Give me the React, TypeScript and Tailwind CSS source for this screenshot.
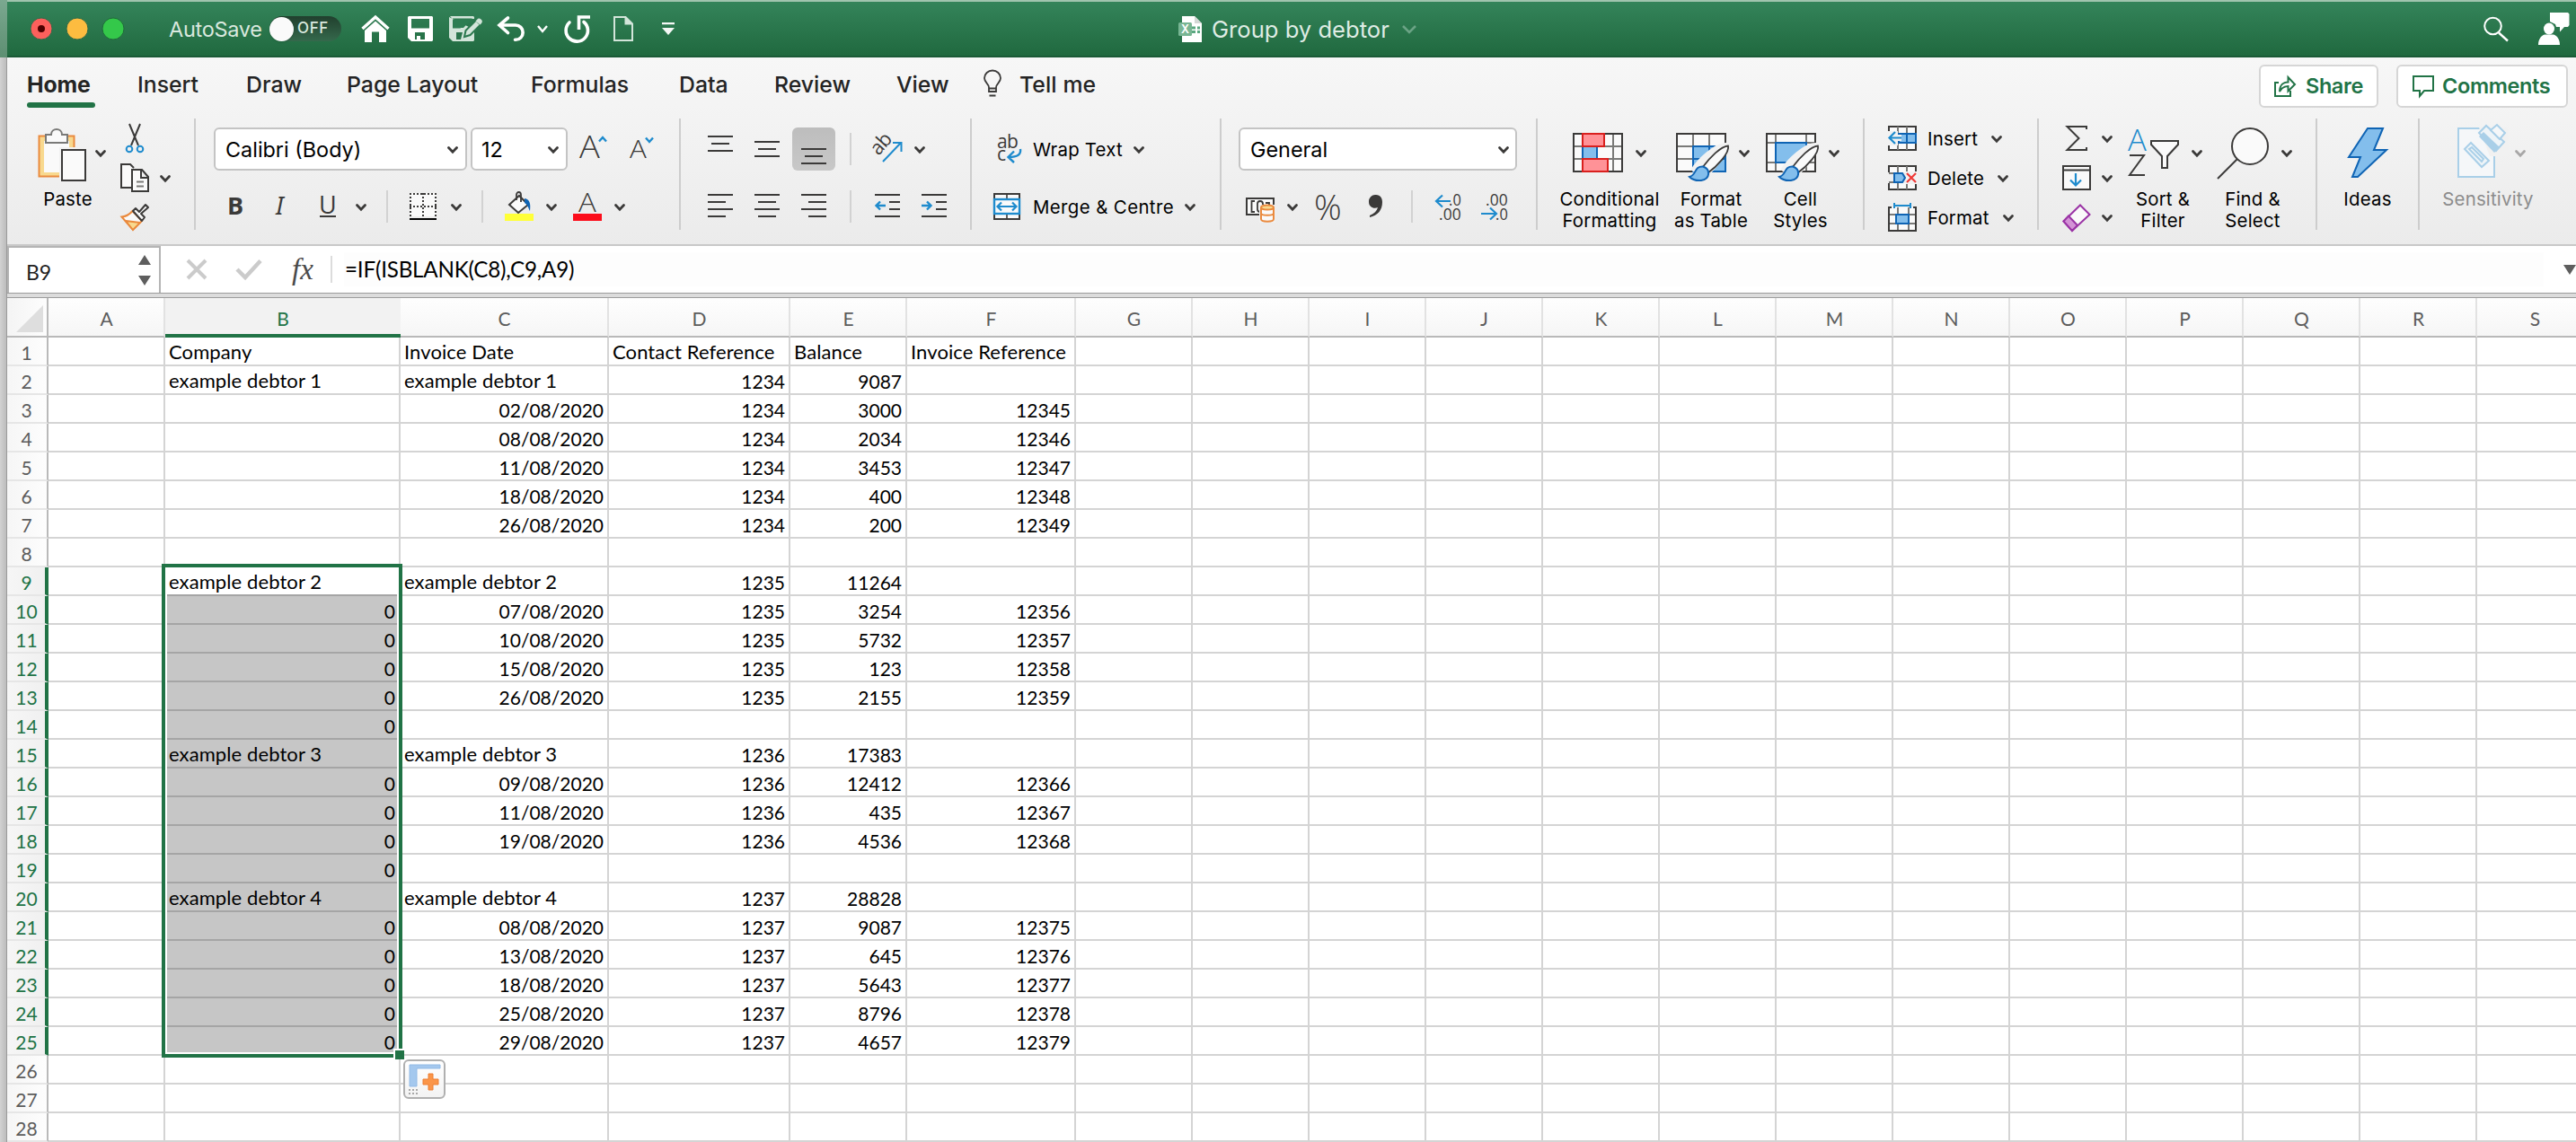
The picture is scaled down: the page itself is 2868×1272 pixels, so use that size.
import type { ReactNode } from 'react';
import clsx from 'clsx';

const tabs = [
  { label: 'Home', cls: 'w-[123px] font-bold tracking-[-0.1px]' },
  { label: 'Insert', cls: 'w-[121px]' },
  { label: 'Draw', cls: 'w-[112px]' },
  { label: 'Page Layout', cls: 'w-[205px]' },
  { label: 'Formulas', cls: 'w-[165px]' },
  { label: 'Data', cls: 'w-[106px]' },
  { label: 'Review', cls: 'w-[136px]' },
  { label: 'View', cls: 'w-[96px]' },
];

const columns = [
  { name: 'A', width: 130 },
  { name: 'B', width: 262 },
  { name: 'C', width: 232 },
  { name: 'D', width: 202 },
  { name: 'E', width: 130 },
  { name: 'F', width: 188 },
  ...'GHIJKLMNOPQRS'.split('').map((name) => ({ name, width: 130 })),
];

// columns B to F, rows 1 to 28
const rows: string[][] = [
  ['Company', 'Invoice Date', 'Contact Reference', 'Balance', 'Invoice Reference'],
  ['example debtor 1', 'example debtor 1', '1234', '9087', ''],
  ['', '02/08/2020', '1234', '3000', '12345'],
  ['', '08/08/2020', '1234', '2034', '12346'],
  ['', '11/08/2020', '1234', '3453', '12347'],
  ['', '18/08/2020', '1234', '400', '12348'],
  ['', '26/08/2020', '1234', '200', '12349'],
  [],
  ['example debtor 2', 'example debtor 2', '1235', '11264', ''],
  ['0', '07/08/2020', '1235', '3254', '12356'],
  ['0', '10/08/2020', '1235', '5732', '12357'],
  ['0', '15/08/2020', '1235', '123', '12358'],
  ['0', '26/08/2020', '1235', '2155', '12359'],
  ['0'],
  ['example debtor 3', 'example debtor 3', '1236', '17383', ''],
  ['0', '09/08/2020', '1236', '12412', '12366'],
  ['0', '11/08/2020', '1236', '435', '12367'],
  ['0', '19/08/2020', '1236', '4536', '12368'],
  ['0'],
  ['example debtor 4', 'example debtor 4', '1237', '28828', ''],
  ['0', '08/08/2020', '1237', '9087', '12375'],
  ['0', '13/08/2020', '1237', '645', '12376'],
  ['0', '18/08/2020', '1237', '5643', '12377'],
  ['0', '25/08/2020', '1237', '8796', '12378'],
  ['0', '29/08/2020', '1237', '4657', '12379'],
  [],
  [],
  [],
];

const DARK = '#3b3a39';
const BLUE = '#1e8bcd';
const NAVY = '#0f64b4';
const SKY = '#83beec';
const PAPER = '#fafafa';

function Icon({ w, h, className, children }: { w: number; h: number; className?: string; children: ReactNode }) {
  return (
    <svg width={w} height={h} viewBox={`0 0 ${w} ${h}`} fill="none" className={clsx('shrink-0 overflow-visible', className)}>
      {children}
    </svg>
  );
}

function Chevron({ className }: { className?: string }) {
  return (
    <Icon w={12} h={8} className={clsx('relative top-px text-[#3b3a39]', className)}>
      <path d="M1.5 1.5L6 6.2l4.5-4.7" stroke="currentColor" strokeWidth="2.8" strokeLinecap="round" />
    </Icon>
  );
}

function Divider({ className }: { className?: string }) {
  return <div className={clsx('h-[124px] w-[2px] shrink-0 bg-[#cdcdcd]', className)} />;
}

function SmallDivider({ className }: { className?: string }) {
  return <div className={clsx('h-9 w-[2px] shrink-0 bg-[#d2d2d2]', className)} />;
}

function Lines({ className, rows }: { className?: string; rows: [number, number, number][] }) {
  return (
    <Icon w={28} h={30} className={className}>
      {rows.map(([x, y, w], i) => (
        <rect key={i} x={x} y={y} width={w} height="2" fill={DARK} />
      ))}
    </Icon>
  );
}

function Group({ className, top, bottom }: { className?: string; top: ReactNode; bottom: ReactNode }) {
  return (
    <div className={clsx('flex shrink-0 flex-col gap-4 pt-[10px]', className)}>
      <div className="flex h-12 items-center">{top}</div>
      <div className="flex h-12 items-center">{bottom}</div>
    </div>
  );
}

function Big({ className, icon, label, labelCls, chevron }: { className?: string; icon: ReactNode; label: ReactNode; labelCls: string; chevron?: string }) {
  return (
    <div className={clsx('flex shrink-0 flex-col', className)}>
      <div className="flex h-[66px] items-start">
        {icon}
        {chevron && <Chevron className={chevron} />}
      </div>
      <div className={clsx('text-center leading-6', labelCls)}>{label}</div>
    </div>
  );
}

function TitleBar() {
  return (
    <div className="flex h-16 items-center border-t-2 border-b-2 border-t-[#a0c4ae] border-b-[#1b5a37] bg-linear-to-b from-[#34845a] to-[#20693f] pl-[25px] text-[#d9e8de]">
      <Icon w={106} h={28}>
        <circle cx="13" cy="14" r="12" fill="#fc605c" stroke="#2f6a47" />
        <circle cx="13" cy="14" r="4" fill="#4d0000" />
        <circle cx="53" cy="14" r="12" fill="#fdbc40" stroke="#2f6a47" />
        <circle cx="93" cy="14" r="12" fill="#34c84a" stroke="#1f6a3a" />
      </Icon>
      <span className="ml-[49px] w-[112px] pt-[2px] text-[23.5px] tracking-[-0.3px] whitespace-nowrap">AutoSave</span>
      <div className="flex h-7 w-[80px] items-center rounded-full bg-linear-to-b from-[#21402e] to-[#35694c]">
        <div className="size-[27px] rounded-full bg-[#fafafa] shadow" />
        <span className="ml-1 text-[17px] font-medium tracking-[0.6px]">OFF</span>
      </div>
      <Icon w={32} h={30} className="ml-[22px]">
        <path d="M1.5 15L16 2l14.500 13" stroke="#fff" strokeWidth="3.400" />
        <path d="M4 17L16 6.500 28 17v13h-8V18.500h-8V30H4z" fill="#fff" />
      </Icon>
      <Icon w={28} h={28} className="ml-[20px]">
        <path fillRule="evenodd" d="M1 0h26l1 1v26l-1 1H4l-4-4V1zM4 3v10.500h20V3zM8 18v8h2v-4h4v4h5v-8z" fill="#fff" />
      </Icon>
      <Icon w={36} h={28} className="ml-[18px]">
        <path d="M1 0h26l1 1v2h-2.500V2.500H4v11h18L15 20l-1 3h-3v3H9v-8h8M28 15v12l-1 1H4l-4-4V1" fill="#d3e5da" />
        <path d="M4.500 3.500h20.500L16 13H4.500z" fill="#2d7d52" />
        <path d="M8 18h7l-2 8H8z" fill="#2a754c" />
        <path d="M17 23l1.500-7L30 4.500l5 5L23.500 21z" fill="#d3e5da" stroke="#2b784e" strokeWidth="2" />
        <path d="M31 4a3 3 0 0 1 5 4l-1.500 1.500-5-4z" fill="#d3e5da" />
      </Icon>
      <Icon w={31} h={28} className="ml-[18px]">
        <path d="M11.500 2L2 10l9.500 8.500M3 10h17a8 8 0 0 1 0 16.300h-.5" stroke="#fff" strokeWidth="3.600" strokeLinecap="round" />
      </Icon>
      <Icon w={12} h={8} className="ml-[13px]">
        <path d="M1 1l5 6 5-6" stroke="#fff" strokeWidth="2.400" />
      </Icon>
      <Icon w={30} h={30} className="ml-[18px]">
        <path d="M6 8A12.200 12.200 0 1 0 22 7.500" stroke="#fff" strokeWidth="3.600" strokeLinecap="round" />
        <path d="M16.500 16V2H29" stroke="#fff" strokeWidth="3.600" />
      </Icon>
      <Icon w={22} h={28} className="ml-[25px]">
        <path d="M1 1h12.500L21 8.500V27H1z" stroke="#d3e5da" strokeWidth="2" />
        <path d="M12.500 0L22 9.500h-9.500z" fill="#d3e5da" />
      </Icon>
      <Icon w={14} h={14} className="ml-[32px]">
        <path d="M0 0h14v2.200H0zM0 6h14l-7 8z" fill="#f5f8f6" />
      </Icon>

      <Icon w={26} h={29} className="ml-[561px]">
        <path d="M4 0h14l8 8v21H4z" fill="#fff" />
        <path d="M18 0l8 8h-8z" fill="#d4d9d6" />
        <path d="M15 11.500h4v3h-4zm6 0h3v3h-3zm-6 4.500h4v3h-4zm6 0h3v3h-3z" fill="#5aa880" />
        <rect y="7" width="15" height="15" rx="1.500" fill="#78b593" />
        <text x="3" y="19" fontSize="12.500" fontWeight="600" fill="#fff">X</text>
      </Icon>
      <span className="ml-[11px] w-[212px] pt-[3px] text-[25.6px] whitespace-nowrap text-[#dfece4]">Group by debtor</span>
      <Icon w={16} h={9}>
        <path d="M1 1l7 7 7-7" stroke="#6ba385" strokeWidth="2.600" />
      </Icon>
      <Icon w={28} h={28} className="ml-[1188px]">
        <circle cx="10.500" cy="11" r="9.300" stroke="#fff" strokeWidth="2" />
        <path d="M17 18.500l10 9" stroke="#fff" strokeWidth="2.400" />
      </Icon>
      <Icon w={36} h={36} className="ml-[33px]">
        <path d="M0 36c0-6 3-10.500 7-11.500h10c4 1 7 5.500 7 11.500z" fill="#fff" />
        <ellipse cx="12" cy="18" rx="6" ry="6.500" fill="#fff" />
        <path d="M13 0h20l1.500 1.500V14L33 16h-4l-5 5.500V16h-4l-1-3-6-3z" fill="#fff" />
      </Icon>
    </div>
  );
}

function TabBar() {
  return (
    <div className="flex h-[68px] items-center pl-[22px] text-[24.8px] font-medium text-[#242424]">
      {tabs.map((tab, i) => (
        <div key={tab.label} className={clsx('relative shrink-0 whitespace-nowrap', tab.cls)}>
          <span className="relative -top-[3px]">{tab.label}</span>
          {i === 0 && <div className="absolute -bottom-[3px] left-0 h-[6px] w-[76px] rounded-full bg-[#217346]" />}
        </div>
      ))}
      <Icon w={20} h={30} className="relative -top-[5px] ml-px">
        <path d="M6 19.500C6 15 1 14 1 9a9 8.500 0 0 1 18 0c0 5-5 6-5 10.500V24H6zM6 20.500h8" stroke={DARK} strokeWidth="1.800" />
        <path d="M6.500 28.500h7" stroke={DARK} strokeWidth="2" />
      </Icon>
      <span className="relative -top-[3px] ml-5 w-[1380px] shrink-0 tracking-[0.1px]">Tell me</span>
      <div className="mt-2 flex h-12 w-[133px] shrink-0 items-center self-start rounded-md border-2 border-[#d6d6d6] bg-white pl-[15px] font-semibold text-[#217346]">
        <Icon w={24} h={24}>
          <path d="M5 8H1v15h17v-6" stroke="#217346" strokeWidth="2" />
          <path d="M6 18c0-7 4-10.500 9.500-10.500V2l7.500 8-7.500 7.500V12C11 12 8 14 6 18z" stroke="#217346" strokeWidth="2" />
        </Icon>
        <span className="ml-[11px] text-[23.5px] tracking-[-0.4px]">Share</span>
      </div>
      <div className="mt-2 ml-5 flex h-12 w-[191px] shrink-0 items-center self-start rounded-md border-2 border-[#d6d6d6] bg-white pl-[16px] font-semibold text-[#217346]">
        <Icon w={24} h={24}>
          <path d="M1 1h22v16H13l-5 6v-6H1z" stroke="#217346" strokeWidth="2" />
        </Icon>
        <span className="ml-[9px] text-[23.5px] tracking-[-0.35px]">Comments</span>
      </div>
    </div>
  );
}

function Brush() {
  return (
    <>
      <path d="M18 42C24 32 44 12 56 13c6 3-16 30-28 39" fill="#f2f2f2" stroke="#f2f2f2" strokeWidth="4" />
      <path d="M29 39C38 27 50 15 58 14.500 60 22 46 37 35 45z" fill={PAPER} stroke={DARK} strokeWidth="1.800" />
      <path d="M15 49c8-2 5-12 15-11.500 9 3 8 14-2 15.500-5 .5-10-1-13-4z" fill={SKY} stroke={NAVY} strokeWidth="2" />
    </>
  );
}

function Ribbon() {
  return (
    <div className="flex h-[142px] items-start border-b-2 border-[#c8c8c8] text-[20.4px] tracking-[0.2px] text-black">
      {/* clipboard */}
      <div className="ml-[34px] w-[92px] shrink-0 pt-[10px]">
        <div className="flex h-[68px] items-start">
          <Icon w={54} h={60}>
            <rect x="1.500" y="9.500" width="39" height="45" fill="#f8d98f" stroke="#ea8a3e" strokeWidth="2" />
            <path d="M7 15h28v35H7z" fill={PAPER} />
            <path d="M9 8h6c0-8 12-8 12 0h6v9H9z" fill={PAPER} stroke="#7a7a78" strokeWidth="2" />
            <path d="M24 22h20v35H24z" fill="#f2f2f2" />
            <rect x="27" y="25" width="26" height="34" fill={PAPER} stroke={DARK} strokeWidth="2" />
          </Icon>
          <Chevron className="mt-6 ml-[10px]" />
        </div>
        <div className="w-[67px] text-center leading-6">Paste</div>
      </div>
      <div className="w-[82px] shrink-0">
        <div className="flex h-11 items-center">
          <Icon w={20} h={32} className="ml-[6px]">
            <path d="M4 0l10 24M16 0L6 24" stroke={DARK} strokeWidth="2" />
            <circle cx="4" cy="28" r="3.300" stroke={BLUE} strokeWidth="2" />
            <circle cx="16" cy="28" r="3.300" stroke={BLUE} strokeWidth="2" />
          </Icon>
        </div>
        <div className="flex h-11 items-center">
          <Icon w={32} h={32}>
            <path d="M12 27H1V1h10l4 4" fill={PAPER} stroke={DARK} strokeWidth="2" />
            <path d="M13 7h11l7 8v16H13zM23 7v9h8" fill={PAPER} stroke={DARK} strokeWidth="2" />
            <path d="M18 20.500h8M18 25.500h8" stroke="#7a7a78" strokeWidth="2" />
          </Icon>
          <Chevron className="ml-3" />
        </div>
        <div className="flex h-11 items-center">
          <Icon w={32} h={30}>
            <path d="M1.500 14.500C7 14 11 11 13.500 8L24 19 14 29z" fill={PAPER} stroke="#ea8a3e" strokeWidth="2" />
            <path d="M6 19l16 2-8 8z" fill="#f8d98f" stroke="#ea8a3e" strokeWidth="1.800" />
            <path d="M14 8l3-3 4 4 7-8 3 3-8 7 4 4-3 4z" fill={PAPER} stroke={DARK} strokeWidth="2" strokeLinejoin="round" />
          </Icon>
        </div>
      </div>
      <Divider />

      {/* font */}
      <Group
        className="w-[538px]"
        top={
          <>
            <div className="ml-5 flex h-12 w-[282px] shrink-0 items-center justify-between rounded-md border-2 border-[#c4c4c4] bg-white pr-2 pl-[11px] text-[23.4px] tracking-normal">
              <span className="pt-[2px]">Calibri (Body)</span>
              <Chevron />
            </div>
            <div className="ml-1 flex h-12 w-[108px] shrink-0 items-center justify-between rounded-md border-2 border-[#c4c4c4] bg-white pr-2 pl-[10px] text-[23.4px] tracking-normal">
              <span className="pt-[2px]">12</span>
              <Chevron />
            </div>
            <Icon w={30} h={48} className="ml-[14px]">
              <text x="-1" y="34" fontSize="34" className="font-['Open_Sans'] font-light" fill={DARK} textLength="23" lengthAdjust="spacingAndGlyphs">A</text>
              <path d="M21 15.500l4-4.500 4 4.500" stroke={BLUE} strokeWidth="2.400" />
            </Icon>
            <Icon w={30} h={48} className="ml-[25px]">
              <text x="0" y="34" fontSize="27" className="font-['Open_Sans'] font-light" fill={DARK} textLength="19" lengthAdjust="spacingAndGlyphs">A</text>
              <path d="M18 11.500l4 4.500 4-4.500" stroke={BLUE} strokeWidth="2.400" />
            </Icon>
          </>
        }
        bottom={
          <>
            <span className="ml-[35px] w-[54px] shrink-0 pb-1 font-['Open_Sans'] text-[27px] leading-none font-bold text-[#3b3a39]">B</span>
            <span className="w-[48px] shrink-0 pb-1 font-['Noto_Sans'] text-[27px] leading-none text-[#3b3a39] italic">I</span>
            <Icon w={20} h={48}>
              <text x="0" y="32" fontSize="27" className="font-['Open_Sans']" fill={DARK}>U</text>
              <path d="M1 35h18" stroke={DARK} strokeWidth="2" />
            </Icon>
            <Chevron className="ml-[21px]" />
            <SmallDivider className="ml-[22px]" />
            <Icon w={30} h={30} className="ml-6">
              <rect width="30" height="26" fill={PAPER} />
              <path d="M0 1h30M1 0v26M29 0v26M0 15h30M15 0v26" stroke={DARK} strokeWidth="2" strokeDasharray="2 2" />
              <path d="M0 29h30" stroke="#000" strokeWidth="2" />
            </Icon>
            <Chevron className="ml-4" />
            <SmallDivider className="ml-[22px]" />
            <Icon w={32} h={32} className="ml-6">
              <path d="M5 14L16 4l10 10-11 9z" fill={PAPER} stroke={DARK} strokeWidth="2" />
              <path d="M13 9V3c0-4 5-4 5 0v8" stroke={DARK} strokeWidth="1.800" />
              <path d="M22 7c6 1 7 6 6 14-2-3-2-7-6-9z" fill={NAVY} />
              <rect y="24" width="32" height="8" fill="#ffff38" />
            </Icon>
            <Chevron className="ml-[14px]" />
            <Icon w={32} h={32} className="ml-[18px]">
              <text x="6" y="21.500" fontSize="30" className="font-['Open_Sans'] font-light" fill={DARK} textLength="20" lengthAdjust="spacingAndGlyphs">A</text>
              <rect y="24" width="32" height="8" fill="#fc0d1b" />
            </Icon>
            <Chevron className="ml-[14px]" />
          </>
        }
      />
      <Divider />

      {/* alignment */}
      <Group
        className="w-[322px]"
        top={
          <>
            <Lines className="ml-[30px]" rows={[[0, 0, 28], [4, 8, 20], [0, 16, 28]]} />
            <Lines className="ml-6" rows={[[0, 6, 28], [4, 14, 20], [0, 22, 28]]} />
            <div className="ml-[14px] flex h-12 w-12 shrink-0 items-center rounded-md bg-linear-to-b from-[#bdbdbd] to-[#c8c8c8] pl-[10px]">
              <Lines rows={[[0, 14, 28], [4, 22, 20], [0, 30, 28]]} />
            </div>
            <SmallDivider className="ml-4" />
            <Icon w={34} h={32} className="ml-6">
              <text x="6" y="24" transform="rotate(-48 6 24)" fontSize="22" className="font-['Open_Sans']" fill={DARK} textLength="25">ab</text>
              <path d="M11 30L31 9M22 9h9.500v10" stroke={BLUE} strokeWidth="2" />
            </Icon>
            <Chevron className="ml-[12px]" />
          </>
        }
        bottom={
          <>
            <Lines className="ml-[30px]" rows={[[0, 1, 28], [0, 9, 20], [0, 17, 28], [0, 25, 20]]} />
            <Lines className="ml-6" rows={[[0, 1, 28], [4, 9, 20], [0, 17, 28], [4, 25, 20]]} />
            <Lines className="ml-6" rows={[[0, 1, 28], [8, 9, 20], [0, 17, 28], [8, 25, 20]]} />
            <SmallDivider className="ml-[26px]" />
            <Icon w={28} h={30} className="ml-[26px]">
              <path d="M0 2h28M16 10h12M16 18h12M0 26h28" stroke={DARK} strokeWidth="2" />
              <path d="M12 14H2M6 9.500L1.500 14 6 18.500" stroke={BLUE} strokeWidth="2.400" />
            </Icon>
            <Icon w={28} h={30} className="ml-6">
              <path d="M0 2h28M16 10h12M16 18h12M0 26h28" stroke={DARK} strokeWidth="2" />
              <path d="M0 14h10M6 9.500l4.500 4.500L6 18.500" stroke={BLUE} strokeWidth="2.400" />
            </Icon>
          </>
        }
      />
      <Divider />

      {/* wrap and merge */}
      <Group
        className="w-[276px]"
        top={
          <>
            <Icon w={28} h={36} className="ml-7">
              <text x="0" y="17" fontSize="21" className="font-['Open_Sans']" fill={DARK} textLength="24">ab</text>
              <text x="0" y="31" fontSize="21" className="font-['Open_Sans']" fill={DARK}>c</text>
              <path d="M26 18c1 6-3 9-13 9M19 20.500L12.500 27l6.500 6" stroke={BLUE} strokeWidth="2.400" />
            </Icon>
            <span className="ml-3 w-[112px] shrink-0 pt-[2px] whitespace-nowrap">Wrap Text</span>
            <Chevron />
          </>
        }
        bottom={
          <>
            <Icon w={30} h={30} className="ml-6">
              <rect x="1" y="1" width="28" height="28" fill={PAPER} stroke={DARK} strokeWidth="2" />
              <path d="M15 1v28" stroke={DARK} strokeWidth="1.600" />
              <rect x="1" y="7" width="28" height="16" fill={PAPER} stroke={BLUE} strokeWidth="2.400" />
              <path d="M5 15h20M9 10.500L4.500 15 9 19.500M21 10.500l4.500 4.500-4.500 4.500" stroke={BLUE} strokeWidth="2.200" />
            </Icon>
            <span className="ml-[14px] w-[169px] shrink-0 pt-[2px] tracking-[0.4px] whitespace-nowrap">Merge &amp; Centre</span>
            <Chevron />
          </>
        }
      />
      <Divider />

      {/* number */}
      <Group
        className="w-[350px]"
        top={
          <div className="ml-[19px] flex h-12 w-[310px] items-center justify-between rounded-md border-2 border-[#c4c4c4] bg-white pr-[7px] pl-[11px] text-[23.4px] tracking-normal">
            <span className="pt-[2px]">General</span>
            <Chevron />
          </div>
        }
        bottom={
          <>
            <Icon w={32} h={30} className="ml-[27px]">
              <rect x="1" y="6" width="30" height="18" fill={PAPER} stroke={DARK} strokeWidth="2" />
              <path d="M10 9H6.500v12H10M19 17v-5a3 3 0 0 0-6 0v6a3 3 0 0 0 3 3M22 11h4v3" stroke={DARK} strokeWidth="1.800" />
              <path d="M15 13h18v20H15z" fill="#f0f0f0" />
              <path d="M17 16v13c0 3.500 14 3.500 14 0V16" fill={PAPER} stroke="#ea8a3e" strokeWidth="2" />
              <ellipse cx="24" cy="16" rx="7" ry="2.600" fill="#f8d98f" stroke="#ea8a3e" strokeWidth="2" />
              <path d="M17 22.500c0 3 14 3 14 0" stroke="#ea8a3e" strokeWidth="2" />
            </Icon>
            <Chevron className="ml-[14px]" />
            <span className="ml-[18px] w-[61px] shrink-0 font-['Open_Sans'] text-[38px] leading-none font-light text-[#3b3a39]">%</span>
            <Icon w={16} h={26}>
              <path d="M0 8a7 7.500 0 0 1 8-8c5 0 7 4 7 8 0 9-5 15-14 17v-2c5-2 8-5 9-9-4 2-10 0-10-6z" fill={DARK} />
            </Icon>
            <SmallDivider className="ml-[31px]" />
            <Icon w={32} h={30} className="ml-6">
              <path d="M18 9H2M9 2.500L2 9l7 6.500" stroke={BLUE} strokeWidth="2.200" />
              <text x="16" y="14" fontSize="19" className="font-['Open_Sans']" fill={DARK} textLength="14" lengthAdjust="spacingAndGlyphs">.0</text>
              <text x="5" y="30" fontSize="19" className="font-['Open_Sans']" fill={DARK} textLength="25" lengthAdjust="spacingAndGlyphs">.00</text>
            </Icon>
            <Icon w={32} h={30} className="ml-5">
              <text x="5" y="14" fontSize="19" className="font-['Open_Sans']" fill={DARK} textLength="25" lengthAdjust="spacingAndGlyphs">.00</text>
              <text x="16" y="30" fontSize="19" className="font-['Open_Sans']" fill={DARK} textLength="14" lengthAdjust="spacingAndGlyphs">.0</text>
              <path d="M0 23h16M10 16.500l7 6.500-7 6.500" stroke={BLUE} strokeWidth="2.200" />
            </Icon>
          </>
        }
      />
      <Divider />

      {/* styles */}
      <Big
        className="w-[138px] pt-4 pl-[24px]"
        labelCls="-mt-[4px] w-[112px] whitespace-nowrap"
        chevron="mt-[18px] ml-[14px]"
        label={<>Conditional<br />Formatting</>}
        icon={
          <Icon w={56} h={44} className="ml-[15px]">
            <rect x="1" y="1" width="54" height="42" fill={PAPER} />
            <path d="M1 15h54M1 29h54M11 1v42M45 1v42" stroke="#7a7a78" strokeWidth="2" />
            <rect x="1" y="1" width="54" height="42" stroke={DARK} strokeWidth="2" />
            <rect x="11" y="15" width="16" height="14" fill={SKY} stroke={NAVY} strokeWidth="2" />
            <rect x="28" y="16" width="16" height="12" fill={PAPER} />
            <rect x="11" y="1" width="24" height="14" fill="#ff9297" stroke="#d9201e" strokeWidth="2" />
            <rect x="11" y="29" width="28" height="14" fill="#ff9297" stroke="#d9201e" strokeWidth="2" />
          </Icon>
        }
      />
      <Big
        className="w-[104px] pt-4"
        labelCls="-mt-[4px] w-[110px] whitespace-nowrap"
        chevron="mt-[18px] ml-[10px]"
        label={<>Format<br />as Table</>}
        icon={
          <Icon w={60} h={54} className="ml-[16px]">
            <rect x="1" y="1" width="54" height="42" fill={PAPER} />
            <path d="M1 15h54M1 29h54M19 1v42M37 1v42" stroke="#7a7a78" strokeWidth="2" />
            <rect x="1" y="1" width="54" height="42" stroke={DARK} strokeWidth="2" />
            <path d="M19 15h36v28H19zM19 29h36M37 15v28" fill={SKY} stroke={NAVY} strokeWidth="2" />
            <Brush />
          </Icon>
        }
      />
      <Big
        className="w-[120px] pt-4"
        labelCls="-mt-[4px] w-[101px] whitespace-nowrap"
        chevron="mt-[18px] ml-[10px]"
        label={<>Cell<br />Styles</>}
        icon={
          <Icon w={60} h={54} className="ml-[12px]">
            <rect x="1" y="1" width="54" height="42" fill={PAPER} />
            <path d="M1 11h54M1 33h54M11 1v42M45 1v42" stroke="#7a7a78" strokeWidth="2" />
            <rect x="1" y="1" width="54" height="42" stroke={DARK} strokeWidth="2" />
            <path d="M11 11h34v22H11z" fill={SKY} stroke={NAVY} strokeWidth="2" />
            <Brush />
          </Icon>
        }
      />
      <Divider />

      {/* cells */}
      <div className="w-[192px] shrink-0 pl-[26px]">
        <div className="flex h-11 items-center">
          <Icon w={32} h={28}>
            <rect x="1" y="1" width="30" height="26" fill={PAPER} stroke={DARK} strokeWidth="2" />
            <path d="M11 1v26M21 1v26" stroke="#7a7a78" strokeWidth="2" />
            <path d="M-1 6h12v16H-1z" fill="#f2f2f2" />
            <path d="M31 9H12v10h19zM21 9v10" fill={SKY} stroke={NAVY} strokeWidth="2" />
            <path d="M8 10h7v7H8z" fill="#f2f2f2" />
            <path d="M15 13.500H2M8 7l-6.500 6.500L8 20" stroke={BLUE} strokeWidth="2.200" />
          </Icon>
          <span className="ml-3 w-[71px] shrink-0 pt-[2px]">Insert</span>
          <Chevron />
        </div>
        <div className="flex h-11 items-center">
          <Icon w={32} h={28}>
            <path d="M1 8V1h30v7M1 20v7h30v-7" fill={PAPER} stroke={DARK} strokeWidth="2" />
            <path d="M11 1v8M21 1v8M11 19v8M21 19v8M1 9h6M1 19h6" stroke="#7a7a78" strokeWidth="2" />
            <path d="M7 9h9l3 5-3 5H7z" fill={SKY} stroke={NAVY} strokeWidth="2" />
            <path d="M20 7h13v14H20z" fill="#f2f2f2" />
            <path d="M21 9l10 10M31 9L21 19" stroke="#f03a37" strokeWidth="2.200" />
          </Icon>
          <span className="ml-3 w-[78px] shrink-0 pt-[2px]">Delete</span>
          <Chevron />
        </div>
        <div className="flex h-11 items-center">
          <Icon w={32} h={32}>
            <rect x="1" y="5" width="30" height="26" fill={PAPER} />
            <path d="M11 5v26M23 5v26M1 13h30M1 23h30" stroke="#7a7a78" strokeWidth="2" />
            <path d="M4 5H1v26h30V5h-3" stroke={DARK} strokeWidth="2" />
            <rect x="9" y="13" width="14" height="10" fill={SKY} stroke={NAVY} strokeWidth="2" />
            <path d="M7 0v6M25 0v6M7 3h18" stroke={BLUE} strokeWidth="2" />
          </Icon>
          <span className="ml-3 w-[84px] shrink-0 pt-[2px]">Format</span>
          <Chevron />
        </div>
      </div>
      <Divider />

      {/* editing */}
      <div className="w-[100px] shrink-0 pl-[26px]">
        <div className="flex h-11 items-center">
          <Icon w={24} h={28} className="ml-1">
            <path d="M23 4V1H1.500l13 13L1.500 27H23v-3" stroke={DARK} strokeWidth="2" />
          </Icon>
          <Chevron className="ml-4" />
        </div>
        <div className="flex h-11 items-center">
          <Icon w={32} h={28}>
            <rect x="1" y="1" width="30" height="26" fill={PAPER} stroke={DARK} strokeWidth="2" />
            <path d="M1 5.500h30" stroke={DARK} strokeWidth="2" />
            <path d="M15 9v13M9 16.500l6 6 6-6" stroke={BLUE} strokeWidth="2.200" />
          </Icon>
          <Chevron className="ml-3" />
        </div>
        <div className="flex h-11 items-center">
          <Icon w={32} h={31}>
            <path d="M1.500 19.500L20 1.500l10.500 10.500L11 30z" fill={PAPER} stroke="#9a33a5" strokeWidth="2" />
            <path d="M1.500 19.500L7 13.500l10 10.500-6 6z" fill="#d392d6" stroke="#9a33a5" strokeWidth="2" />
          </Icon>
          <Chevron className="ml-3" />
        </div>
      </div>
      <Big
        className="w-[98px] pt-3"
        labelCls="w-[76px] whitespace-nowrap"
        chevron="mt-[22px] ml-[14px]"
        label={<>Sort &amp;<br />Filter</>}
        icon={
          <Icon w={56} h={52}>
            <text x="-1" y="24" fontSize="33" className="font-['Open_Sans'] font-light" fill={BLUE} textLength="21" lengthAdjust="spacingAndGlyphs">A</text>
            <path d="M1 29h16L1 51h17" stroke={DARK} strokeWidth="2" />
            <path d="M25 13h30v4L43 30v13h-6V30L25 17z" fill={PAPER} stroke={DARK} strokeWidth="2" />
          </Icon>
        }
      />
      <Big
        className="w-[110px] pt-[10px]"
        labelCls="mt-[2px] w-[80px] whitespace-nowrap"
        chevron="mt-[24px] ml-[14px]"
        label={<>Find &amp;<br />Select</>}
        icon={
          <Icon w={58} h={58}>
            <circle cx="37" cy="21" r="20" fill={PAPER} stroke={DARK} strokeWidth="2" />
            <path d="M23 35L1 57" stroke={DARK} strokeWidth="2" />
          </Icon>
        }
      />
      <Divider />
      <Big
        className="w-[112px] pt-[10px] pl-[34px]"
        labelCls="mt-[2px] w-[44px] [&>span]:-mx-4"
        label={<span className="whitespace-nowrap">Ideas</span>}
        icon={
          <Icon w={44} h={58}>
            <path d="M22 1h17L29 25h14L11 55H5l9-22H1z" fill={SKY} stroke={NAVY} strokeWidth="2" />
          </Icon>
        }
      />
      <Divider />
      <Big
        className="w-[160px] pt-[6px] pl-[24px]"
        labelCls="mt-[6px] w-[104px] text-[#8c8c8c]"
        chevron="mt-[28px] ml-[10px] opacity-40"
        label="Sensitivity"
        icon={
          <Icon w={54} h={60} className="ml-[18px]">
            <rect x="1" y="5" width="40" height="54" fill="#f5f7f9" stroke="#a9cfe8" strokeWidth="2" />
            <path d="M24 4h32v32H36z" fill="#f1f1f1" />
            <path d="M8 28l7-7 20 20-8 7zM13 28l3-2 13 13-2 3z" fill="#eef4f8" stroke="#a9cfe8" strokeWidth="2" />
            <path d="M24 10l8-8 20 18-9 10z" fill="#eef4f8" stroke="#a9cfe8" strokeWidth="2" />
            <path d="M24 14l5-5 18 17-6 6z" fill="#a9cfe8" />
            <path d="M37 7l7-6 9 9-6 7z" fill="#f5f7f9" stroke="#a9cfe8" strokeWidth="2" />
          </Icon>
        }
      />
    </div>
  );
}

function FormulaBar() {
  return (
    <div className="flex h-[52px] items-center bg-white font-['Lato'] text-black">
      <div className="flex h-full w-[171px] shrink-0 items-center border-t-2 border-r-2 border-l-2 border-[#b4b4b4] pl-[19px]">
        <span className="w-[125px] pt-1 text-[23px] text-[#222]">B9</span>
        <Icon w={14} h={34}>
          <path d="M0 11L7 0l7 11zM0 23l7 11 7-11z" fill="#5e5e5e" />
        </Icon>
      </div>
      <Icon w={24} h={22} className="ml-[28px]">
        <path d="M2 1l20 20M22 1L2 21" stroke="#cbcbcb" strokeWidth="4" />
      </Icon>
      <Icon w={30} h={22} className="ml-[31px]">
        <path d="M2 11l9 9L28 1.500" stroke="#cbcbcb" strokeWidth="4.500" />
      </Icon>
      <span className="ml-[33px] w-[43px] shrink-0 font-['Liberation_Serif'] text-[33px] leading-none text-[#4a4a4a] italic">fx</span>
      <div className="h-[30px] w-[2px] bg-[#dcdcdc]" />
      <div className="ml-[13px] flex h-[38px] w-[2455px] items-center bg-[#fdfdfd] pl-px text-[24.2px] tracking-[-0.2px]">=IF(ISBLANK(C8),C9,A9)</div>
      <Icon w={14} h={11} className="ml-[22px]">
        <path d="M0 0h14l-7 11z" fill="#5e5e5e" />
      </Icon>
    </div>
  );
}

function Sheet() {
  return (
    <div className="relative font-['Lato'] text-[21px]">
      <div className="flex h-11 text-[#5c5c5c]">
        <div className="flex w-[46px] shrink-0 items-end justify-end border-r-2 border-b-2 border-[#b9b9b9] bg-linear-to-r from-[#f4f4f4] to-[#fdfdfd] pr-1 pb-1">
          <Icon w={30} h={30}>
            <path d="M30 0v30H0z" fill="#dedede" />
          </Icon>
        </div>
        {columns.map((col) => (
          <div
            key={col.name}
            style={{ width: col.width }}
            className={clsx(
              'flex shrink-0 items-center justify-center',
              col.name === 'B'
                ? 'border-b-4 border-[#217346] bg-[#f2f2f2] pt-[5px] text-[#217346]'
                : 'border-r-2 border-b-2 border-r-[#e2e2e2] border-b-[#b9b9b9] bg-linear-to-b from-[#fefefe] to-[#f6f6f6] pt-[3px] pl-px',
            )}
          >
            {col.name}
          </div>
        ))}
      </div>

      {rows.map((row, r) => {
        const picked = r >= 8 && r <= 24;
        return (
          <div key={r} className="flex h-8">
            <div
              className={clsx(
                'flex w-[46px] shrink-0 items-center justify-center border-b-2 border-b-[#e6e6e6] pt-[2px] leading-none',
                picked
                  ? 'border-r-4 border-r-[#217346] bg-linear-to-r from-[#f6f6f6] to-[#f0f0f0] pl-px text-[#217346]'
                  : 'border-r-2 border-r-[#b9b9b9] bg-linear-to-r from-[#f6f6f6] to-[#fdfdfd] pr-px text-[#5c5c5c]',
              )}
            >
              {r + 1}
            </div>
            {columns.map((col, c) => {
              const value = row[c - 1] ?? '';
              const numeric = /^\d/.test(value);
              const shaded = c === 1 && r >= 9 && r <= 24;
              return (
                <div
                  key={col.name}
                  style={{ width: col.width }}
                  className={clsx(
                    'flex shrink-0 items-center border-r-2 border-b-2 px-1 pt-[2px] leading-none whitespace-nowrap',
                    numeric ? 'justify-end' : 'text-[22px] tracking-[0.1px]',
                    shaded ? 'border-[#a5a5a5] bg-[#c6c6c6]' : 'border-[#d4d4d4] bg-white',
                    c === 1 && r === 8 && 'border-b-[#a5a5a5]',
                  )}
                >
                  {value}
                </div>
              );
            })}
          </div>
        );
      })}

      {/* selection frame over B9:B25 */}
      <div className="absolute top-[296px] left-[172px] h-[550px] w-[268px] border-4 border-[#217346]">
        <div className="h-full w-full border-2 border-white" />
      </div>
      <div className="absolute top-[836px] left-[430px] size-[12px] border-t-2 border-l-2 border-white bg-[#217346]" />
      <div className="absolute top-[848px] left-[441px] flex h-[44px] w-[47px] items-center justify-center rounded-md border-2 border-[#b0b0b0] bg-linear-to-b from-white to-[#f3f3f3]">
        <Icon w={36} h={34}>
          <path d="M1 1h34v4H9v20H1z" fill="#a4c8ee" stroke="#92bae6" />
          <path d="M0 29h2m2 0h2m2 0h2M0 33h2m2 0h2m2 0h2" stroke="#8f8f8f" strokeWidth="1.500" />
          <path d="M22 11h5v6h6v6h-6v6h-5v-6h-6v-6h6z" fill="#fb9548" stroke="#ec7f33" />
        </Icon>
      </div>
    </div>
  );
}

export default function App() {
  return (
    <div className="flex h-[1272px] w-[2868px] overflow-hidden bg-white font-['Inter']">
      <div className="flex w-2 shrink-0 flex-col">
        <div className="h-16 bg-linear-to-b from-[#7ba890] to-[#5d8f72]" />
        <div className="flex-1 border-r border-[#9a9a9a] bg-linear-to-r from-[#d2d2d2] to-[#bcbcbc]" />
      </div>
      <div className="w-[2860px] shrink-0">
        <TitleBar />
        <div className="bg-linear-to-b from-[#f7f7f7] to-[#ebebeb]">
          <TabBar />
          <Ribbon />
        </div>
        <FormulaBar />
        <div className="h-[6px] border-t border-b border-[#9c9c9c] bg-[#dcdcdc]" />
        <Sheet />
      </div>
    </div>
  );
}
